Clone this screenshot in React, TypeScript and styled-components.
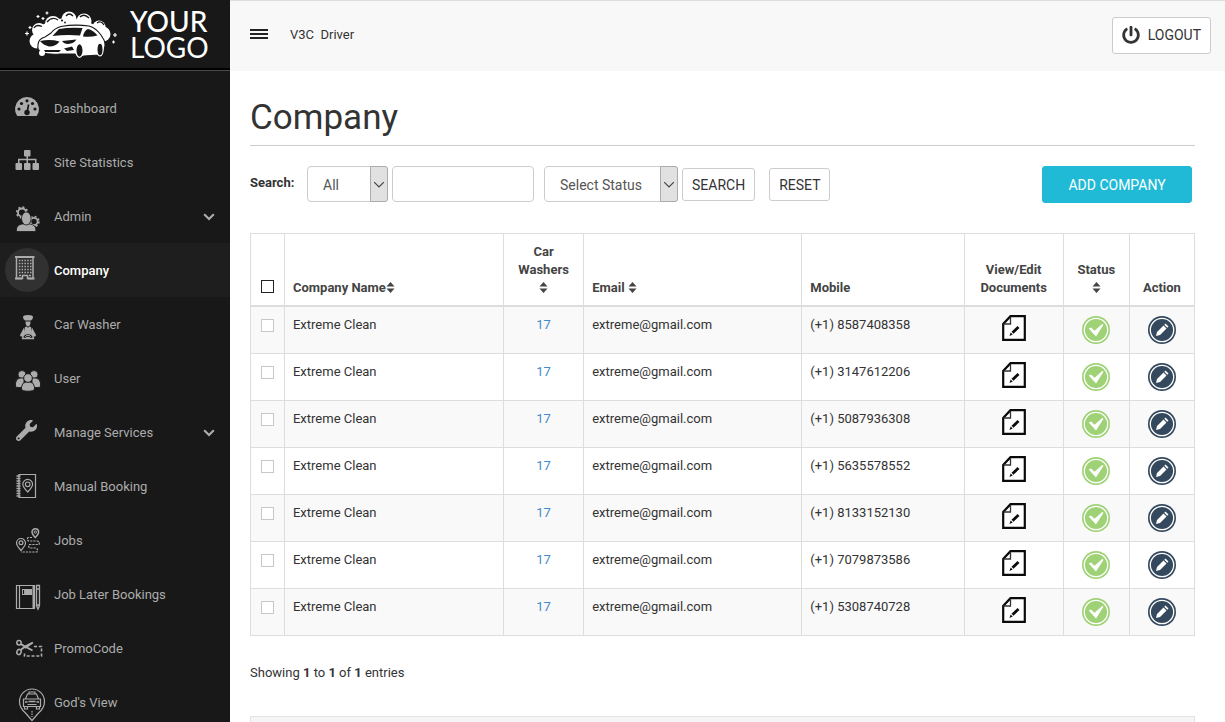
import React from 'react';
import styled, { createGlobalStyle, css } from 'styled-components';
import { FaPowerOff, FaWrench } from 'react-icons/fa';

const GlobalStyle = createGlobalStyle`
  *, *::before, *::after { box-sizing: border-box; }
  body {
    margin: 0;
    background: #fff;
    color: #333;
    font: 13px/18px Roboto, "Liberation Sans", sans-serif;
  }
  button, input, select { font: inherit; color: inherit; }
`;

const NAV_BG = '#181818';

const Shell = styled.div`
  display: flex;
  height: 100vh;
`;

const Sidebar = styled.aside`
  flex: none;
  width: 230px;
  overflow: hidden;
  background: ${NAV_BG};
  color: #acacac;
`;

const Brand = styled.a`
  display: flex;
  align-items: center;
  gap: 10px;
  height: 68px;
  padding-left: 24px;
  color: #fff;
  text-decoration: none;
`;

const BrandName = styled.span`
  font: 28px/26px Lato, "Liberation Sans", sans-serif;
`;

const BrandStrong = styled.span`
  display: block;
  font-weight: 500;
`;

const Nav = styled.nav`
  padding-top: 11px;
  border-top: 2px solid #000;
  box-shadow: inset 0 1px 0 #4a4a4a;
`;

const NavItem = styled.a<{ $active?: boolean }>`
  display: flex;
  align-items: center;
  gap: 5px;
  height: 54px;
  padding: 0 15px 0 5px;
  color: ${(p) => (p.$active ? '#fff' : 'inherit')};
  font-weight: ${(p) => (p.$active ? 500 : 400)};
  background: ${(p) => (p.$active ? '#1e1e1e' : 'transparent')};
  text-decoration: none;
`;

const NavIcon = styled.span<{ $active?: boolean }>`
  flex: none;
  width: 44px;
  height: 44px;
  border-radius: 50%;
  color: #acacac;
  background: ${(p) => (p.$active ? '#313131' : 'transparent')};
  svg { display: block; }
`;

const NavLabel = styled.span`
  flex: 1;
  padding-top: 2px;
`;

const Main = styled.div`
  flex: 1;
  min-width: 0;
  overflow: hidden;
`;

const TopBar = styled.header`
  display: flex;
  align-items: center;
  height: 71px;
  padding: 0 14px 2px 20px;
  border-top: 1px solid #ddd;
  background: #f8f8f8;
`;

const MenuButton = styled.button`
  display: grid;
  gap: 2px;
  width: 18px;
  margin-right: 22px;
  padding: 0 0 2px;
  border: 0;
  background: none;
`;

const MenuBar = styled.span`
  height: 2px;
  background: #222;
`;

const UserName = styled.span`
  flex: 1;
  white-space: pre;
`;

const Button = styled.button<{ $primary?: boolean }>`
  display: flex;
  align-items: center;
  justify-content: center;
  gap: 8px;
  height: 33px;
  padding: 0 9px;
  border: 1px solid #ccc;
  border-radius: 3px;
  background: #fff;
  font-size: 14px;
  white-space: nowrap;
  ${(p) =>
    p.$primary &&
    css`
      height: 37px;
      width: 150px;
      border-color: #20bad6;
      background: #20bad6;
      color: #fff;
    `}
`;

const LogoutButton = styled(Button)`
  height: 37px;
`;

const Content = styled.main`
  padding: 24px 30px 0 20px;
`;

const Title = styled.h1`
  margin: 0;
  padding-bottom: 5px;
  border-bottom: 1px solid #ccc;
  font-size: 35px;
  line-height: 45px;
  font-weight: 400;
`;

const Toolbar = styled.form`
  display: flex;
  align-items: center;
  margin: 20px 3px 30px 0;
`;

const FieldLabel = styled.label`
  width: 57px;
  padding-bottom: 4px;
  font-weight: 700;
`;

const fieldBox = css`
  height: 36px;
  border: 1px solid #ccc;
  border-radius: 4px;
  background: #fff;
  font-size: 14px;
`;

const SelectBox = styled.span<{ $width: number }>`
  position: relative;
  align-self: flex-start;
  width: ${(p) => p.$width}px;
`;

const Select = styled.select`
  ${fieldBox}
  display: block;
  width: 100%;
  padding: 2px 0 0 15px;
  appearance: none;
  color: #555;
`;

const SelectArrow = styled.span`
  position: absolute;
  top: 0;
  right: 0;
  display: grid;
  place-items: center;
  width: 18px;
  height: 36px;
  border: 1px solid #acacac;
  border-radius: 0 3px 3px 0;
  background: #e1e1e1;
  color: #444;
  pointer-events: none;
`;

const TextField = styled.input`
  ${fieldBox}
  align-self: flex-start;
  width: 142px;
  margin: 0 10px 0 4px;
  padding: 0 8px;
`;

const ButtonGroup = styled.div`
  display: flex;
  flex: 1;
  gap: 14px;
  margin-left: 4px;
`;

const Table = styled.table`
  width: 100%;
  table-layout: fixed;
  border-collapse: collapse;
`;

const Col = styled.col<{ $share: number }>`
  width: ${(p) => p.$share}%;
`;

const HeadCell = styled.th<{ $center?: boolean }>`
  height: 72px;
  padding: 8px;
  border: 1px solid #ddd;
  border-bottom: 2px solid #ddd;
  color: #444;
  text-align: ${(p) => (p.$center ? 'center' : 'left')};
  vertical-align: bottom;
`;

const Row = styled.tr`
  height: 47px;
  &:first-child { height: 48px; }
  &:nth-child(odd) { background: #f9f9f9; }
`;

const Cell = styled.td<{ $center?: boolean; $top?: number }>`
  padding: ${(p) => p.$top ?? 9}px 8px 0;
  border: 1px solid #ddd;
  text-align: ${(p) => (p.$center ? 'center' : 'left')};
  vertical-align: top;
`;

const Tick = styled.input<{ $dark?: boolean }>`
  display: block;
  width: 13px;
  height: 13px;
  margin: 4px auto;
  appearance: none;
  border: 1px solid ${(p) => (p.$dark ? '#222' : '#c8c8c8')};
  background: #fff;
`;

const CountLink = styled.a`
  color: #428bca;
  text-decoration: none;
`;

const IconButton = styled.button`
  display: block;
  margin: 0 auto;
  padding: 0;
  border: 0;
  background: none;
  svg { display: block; }
`;

const SortSvg = styled.svg`
  vertical-align: -1px;
`;

const Summary = styled.p`
  margin: 28px 0 34px;
`;

const Notes = styled.section`
  height: 120px;
  border: 1px solid #e3e3e3;
  background: #f4f6f6;
`;

const CarLogo = () => (
  <svg width="96" height="68" viewBox="24 0 96 68" aria-hidden="true">
    <g fill="#fff">
      <circle cx="37" cy="41" r="7.500" />
      <circle cx="103" cy="34" r="7.500" />
      <circle cx="99" cy="27" r="6.500" />
      <circle cx="84" cy="21" r="7.500" />
      <circle cx="69" cy="19" r="7.500" />
      <circle cx="53" cy="24" r="8" />
      <circle cx="39" cy="30" r="7" />
    </g>
    <path d="M36 28L52 20L66 18L84 20L99 27L104 38L40 44Z" fill="#fff" />
    <path
      d="M34 28Q36 24 42 26.500M47 22Q52 16 58 20M66 16Q69 12 73 16M80 17Q84 13 89 18M97 23Q101 20 104 25"
      fill="none"
      stroke={NAV_BG}
      strokeWidth="1.300"
    />
    <circle cx="62" cy="20.500" r="1.100" fill={NAV_BG} />
    <circle cx="65" cy="22.500" r="0.900" fill={NAV_BG} />
    <path
      d="M38 45Q38 39 45 37L51 33Q55 28 61 26.500Q75 24 89 26Q96 28 101 35L104 40Q106 44 104 50Q103 54 99 55L84 56L78 58L75 54L60 54Q48 55 41 52Q37 50 38 45Z"
      fill="#fff"
      stroke={NAV_BG}
      strokeWidth="1.100"
    />
    <path d="M52.500 36L59 29Q70 27 82.500 28L80 35.500Q66 34.500 52.500 36Z" fill={NAV_BG} />
    <path d="M83 36.500Q84 30.500 88 29Q93 30 97.500 35.500Q90 37.500 83 36.500Z" fill={NAV_BG} />
    <path d="M40 41Q50 39 59.500 41.500Q56 46.500 49 46.500Q43 45 40 41Z" fill={NAV_BG} />
    <path d="M62 41L76.500 39.500Q74 43.500 68 44Q64 44 62 41Z" fill={NAV_BG} />
    <path d="M44 50L61 50L59 52L45 52Z" fill={NAV_BG} />
    <path d="M64 48.500L72 46.500L74 50L67 51Z" fill={NAV_BG} />
    <circle cx="42" cy="53" r="3" fill="#fff" />
    <g fill={NAV_BG} stroke="#fff" strokeWidth="1.200">
      <ellipse cx="79.500" cy="50.500" rx="3.600" ry="6.800" />
      <ellipse cx="100" cy="49.500" rx="3.100" ry="6.400" />
    </g>
    <path
      d="M27 31.500v4M25 33.500h4M30 26v3M28.500 27.500h3M38 15v3M36.500 16.500h3M43 17v3M41.500 18.500h3M47 11.500v3M45.500 13h3M115 33v4M113 35h4M113.500 40.500v3M112 42h3"
      stroke="#fff"
      strokeWidth="1.200"
    />
  </svg>
);

/* Sidebar icons share one 44-unit canvas, the size of the active disc. */
const Glyph = ({ children }: { children: React.ReactNode }) => (
  <svg
    width="44"
    height="44"
    viewBox="0 0 44 44"
    fill="none"
    stroke="currentColor"
    strokeWidth="1.2"
    aria-hidden="true"
  >
    {children}
  </svg>
);

const solid = { fill: 'currentColor', stroke: 'none' };

const DashboardIcon = () => (
  <Glyph>
    <path d="M12.200 30A12 12 0 1 1 31.800 30Z" {...solid} />
    <g fill={NAV_BG} stroke="none">
      <circle cx="14" cy="23" r="1.600" />
      <circle cx="30" cy="23" r="1.600" />
      <circle cx="16.500" cy="17.500" r="1.600" />
      <circle cx="27.500" cy="17.500" r="1.600" />
      <circle cx="22" cy="14.800" r="1.600" />
      <circle cx="22" cy="26.500" r="2.700" />
    </g>
    <path d="M22.200 26L23.600 18.500" stroke={NAV_BG} strokeWidth="1.700" />
  </Glyph>
);

const SitemapIcon = () => (
  <Glyph>
    <g {...solid}>
      <rect x="19" y="10" width="6.500" height="6.500" rx="1" />
      <rect x="10.500" y="23" width="6.500" height="7" rx="1" />
      <rect x="19" y="23" width="6.500" height="7" rx="1" />
      <rect x="27.500" y="23" width="6.500" height="7" rx="1" />
    </g>
    <path d="M22.250 16V23M13.750 23.500V19.500H30.750V23.500" strokeWidth="1.500" />
  </Glyph>
);

const AdminIcon = () => (
  <Glyph>
    <circle cx="17" cy="18.500" r="4" strokeWidth="1.800" />
    <circle cx="17" cy="18.500" r="5.400" strokeWidth="1.500" strokeDasharray="2.100 2.100" />
    <circle cx="29" cy="27.500" r="3.600" strokeWidth="1.800" />
    <circle cx="29" cy="27.500" r="5" strokeWidth="1.500" strokeDasharray="2 1.920" />
    <g fill="currentColor" stroke={NAV_BG} strokeWidth="0.800">
      <path d="M11.500 37.500V35Q12 31 17 30H25Q30.300 31 30.800 35V37.500Z" />
      <ellipse cx="21.300" cy="24.500" rx="4.800" ry="6.500" />
    </g>
  </Glyph>
);

const BuildingIcon = () => (
  <Glyph>
    <path d="M11.500 9H28V30.500H22.500V27.500H17.500V30.500H11.500Z" strokeWidth="1.500" />
    <path d="M10 9H29.500M10 30.500H17M23 30.500H29.500" strokeWidth="1.800" />
    <path
      d="M13.800 12.500H26.800M13.800 15.500H26.800M13.800 18.500H26.800M13.800 21.500H26.800M13.800 24.500H26.800"
      strokeWidth="1.600"
      strokeDasharray="1.500 1.300"
    />
    <path d="M14 27.500H16M24 27.500H26" strokeWidth="1.600" />
  </Glyph>
);

const WasherIcon = () => (
  <Glyph>
    <g {...solid}>
      <path d="M18 15Q18 13 23 13Q28 13 28 15Q28 17 26 18.500H20Q18 17 18 15Z" />
      <path d="M20.500 19.500H25.500Q25.500 24 23 24.500Q20.500 24 20.500 19.500Z" />
      <path d="M20 25L22 24.500L23 26L24 24.500L26 25L27 31H19Z" />
      <path d="M19 25.500L15 33Q15 35 17.500 34.500L20 31.500ZM27 25.500L31 33Q31 35 28.500 34.500L26 31.500Z" />
    </g>
    <path d="M17.500 36.500Q18 31.500 23 31.500Q28 31.500 28.500 36.500Z" fill={NAV_BG} strokeWidth="1.400" />
    <ellipse cx="23" cy="34.500" rx="2.500" ry="1" strokeWidth="1" />
  </Glyph>
);

const UsersIcon = () => (
  <Glyph>
    <g fill="currentColor" stroke={NAV_BG} strokeWidth="0.900">
      <circle cx="17" cy="18.500" r="4" />
      <circle cx="29" cy="18.500" r="4" />
      <path d="M10.500 31V27Q11 22.500 15 22H19V31.500H13ZM35.500 31V27Q35 22.500 31 22H27V31.500H33Z" />
      <path d="M16.500 33V31Q17 26.500 21 26H25Q29 26.500 29.500 31V33Q29 35.200 23 35.200Q17 35.200 16.500 33Z" />
      <circle cx="23" cy="22" r="4.300" />
    </g>
  </Glyph>
);

const ServicesIcon = () => (
  <Glyph>
    <FaWrench x="11" y="10" size={21} />
  </Glyph>
);

const BookingIcon = () => (
  <Glyph>
    <path d="M14 10.500H30.500V33.500H14Z" />
    <path
      d="M11.500 12H15.500M11.500 14.500H15.500M11.500 17H15.500M11.500 19.500H15.500M11.500 22H15.500M11.500 24.500H15.500M11.500 27H15.500M11.500 29.500H15.500M11.500 32H15.500"
      strokeWidth="1.300"
    />
    <path d="M22.700 28Q17.800 23 17.800 20.300A4.900 4.900 0 0 1 27.600 20.300Q27.600 23 22.700 28Z" />
    <circle cx="22.700" cy="20.300" r="2.300" />
  </Glyph>
);

const JobsIcon = () => (
  <Glyph>
    <path d="M16 32.500Q11.500 27.500 11.500 25A4.500 4.500 0 0 1 20.500 25Q20.500 27.500 16 32.500Z" />
    <circle cx="16" cy="24.800" r="1.900" />
    <path d="M30.300 19.500Q27 16 27 14A3.300 3.300 0 0 1 33.600 14Q33.600 16 30.300 19.500Z" strokeWidth="1.500" />
    <circle cx="30.300" cy="14" r="1.200" strokeWidth="1" />
    <path
      d="M27 19.500H23Q21.500 21.500 23.500 23H32Q35 23.500 34 26.500H25Q22.500 28 24.500 30H31Q33.500 31 32 34H16"
      strokeDasharray="2.200 1"
    />
  </Glyph>
);

const LaterIcon = () => (
  <Glyph>
    <path d="M11.500 13.500H29.500V36.500H11.500ZM14.500 13.500V36.500" />
    <path d="M28.500 13.500V36.500" strokeWidth="2" />
    <rect x="17" y="17" width="10" height="6" {...solid} />
    <path d="M18.500 18V22" stroke={NAV_BG} />
    <path d="M31.500 13.500H34.500V33.500L33 37L31.500 33.500ZM31.500 17H34.500M31.500 33H34.500" strokeWidth="1.300" />
  </Glyph>
);

const PromoIcon = () => (
  <Glyph>
    <circle cx="14" cy="16.800" r="2.200" strokeWidth="1.500" />
    <ellipse cx="14" cy="26" rx="2.100" ry="2.600" transform="rotate(25 14 26)" strokeWidth="1.500" />
    <path d="M15.800 18.200L27.500 24.500M15.500 24L21 20L27.800 16.500L20 22" strokeWidth="1.900" />
    <path d="M29 20.500H36.500V30H19.500V26" strokeWidth="1.600" strokeDasharray="3 1.800" />
  </Glyph>
);

const GodViewIcon = () => (
  <Glyph>
    <path d="M27 40.500L20.500 33Q14.500 28 14.500 21.500A12.500 12.500 0 0 1 39.500 21.500Q39.500 28 33.500 33Z" />
    <path d="M24 14V12H30V14M20.500 19L22.500 14H31.500L33.500 19" />
    <path d="M18.500 19H35.500V26.500H18.500ZM19.500 26.500V29H22.500V26.500M31.500 26.500V29H34.500V26.500M22.500 24.500H31.500" />
    <path d="M20 22H22.500M31.500 22H34M23.500 21.500H30.500" strokeWidth="1.500" />
    <path d="M27 31V37" strokeDasharray="1.500 1" />
  </Glyph>
);

const Chevron = ({ size, weight }: { size: number; weight: number }) => (
  <svg
    width={size}
    height={size}
    viewBox="0 0 10 10"
    fill="none"
    stroke="currentColor"
    strokeWidth={weight}
    aria-hidden="true"
  >
    <path d="M1 3.500L5 7.500L9 3.500" />
  </svg>
);

const SortIcon = () => (
  <SortSvg width="9" height="11" viewBox="0 0 9 11" fill="currentColor" aria-hidden="true">
    <path d="M4.500 0L8.500 4.500H0.500ZM4.500 11L8.500 6.500H0.500Z" />
  </SortSvg>
);

const DocumentIcon = () => (
  <svg width="26" height="26" viewBox="0 0 26 26" aria-hidden="true">
    <path d="M9.500 1.200H23.800V24.800H2.200V9Z" fill="#fff" stroke="#0a0a0a" strokeWidth="2.200" />
    <path d="M9.500 2V9H2.500" fill="none" stroke="#333" strokeWidth="1.300" />
    <path d="M11.500 17.800L17.500 12" stroke="#0a0a0a" strokeWidth="2.800" />
    <path d="M8.500 21L9.700 17.500L11.700 19.500Z" fill="#0a0a0a" />
  </svg>
);

const StatusIcon = () => (
  <svg width="28" height="28" viewBox="0 0 28 28" aria-hidden="true">
    <circle cx="14" cy="14" r="14" fill="#9fd277" />
    <circle cx="14" cy="14" r="11.700" fill="none" stroke="#fff" strokeWidth="1.300" />
    <path d="M6.700 12.600L9 11.500L12.500 14.800L20.500 7.800L21.400 9L14 20.500Z" fill="#fff" />
  </svg>
);

const EditIcon = () => (
  <svg width="28" height="28" viewBox="0 0 28 28" aria-hidden="true">
    <circle cx="14" cy="14" r="14" fill="#34495e" />
    <circle cx="14" cy="14" r="11.700" fill="none" stroke="#fff" strokeWidth="1.300" />
    <path d="M8 20L9 16L15.500 9.500L18.500 12.500L12 19ZM16.300 8.700L17.500 7.500L20.500 10.500L19.300 11.700Z" fill="#fff" />
  </svg>
);

const navItems = [
  { label: 'Dashboard', Icon: DashboardIcon },
  { label: 'Site Statistics', Icon: SitemapIcon },
  { label: 'Admin', Icon: AdminIcon, expandable: true },
  { label: 'Company', Icon: BuildingIcon, active: true },
  { label: 'Car Washer', Icon: WasherIcon },
  { label: 'User', Icon: UsersIcon },
  { label: 'Manage Services', Icon: ServicesIcon, expandable: true },
  { label: 'Manual Booking', Icon: BookingIcon },
  { label: 'Jobs', Icon: JobsIcon },
  { label: 'Job Later Bookings', Icon: LaterIcon },
  { label: 'PromoCode', Icon: PromoIcon },
  { label: "God's View", Icon: GodViewIcon },
];

const columnShares = [3.6, 23.2, 8.5, 23.1, 17.2, 10.5, 7, 6.9];

const mobiles = [
  '8587408358',
  '3147612206',
  '5087936308',
  '5635578552',
  '8133152130',
  '7079873586',
  '5308740728',
];

export default function App() {
  return (
    <>
      <GlobalStyle />
      <Shell>
        <Sidebar>
          <Brand href="#">
            <CarLogo />
            <BrandName>
              <BrandStrong>YOUR</BrandStrong>
              LOGO
            </BrandName>
          </Brand>
          <Nav>
            {navItems.map(({ label, Icon, active, expandable }) => (
              <NavItem key={label} href="#" $active={active}>
                <NavIcon $active={active}>
                  <Icon />
                </NavIcon>
                <NavLabel>{label}</NavLabel>
                {expandable && <Chevron size={12} weight={1.8} />}
              </NavItem>
            ))}
          </Nav>
        </Sidebar>
        <Main>
          <TopBar>
            <MenuButton type="button" aria-label="Toggle menu">
              <MenuBar />
              <MenuBar />
              <MenuBar />
            </MenuButton>
            <UserName>{'V3C  Driver'}</UserName>
            <LogoutButton type="button">
              <FaPowerOff size={18} aria-hidden="true" />
              LOGOUT
            </LogoutButton>
          </TopBar>
          <Content>
            <Title>Company</Title>
            <Toolbar onSubmit={(e) => e.preventDefault()}>
              <FieldLabel htmlFor="keyword">Search:</FieldLabel>
              <SelectBox $width={81}>
                <Select aria-label="Search in">
                  <option>All</option>
                </Select>
                <SelectArrow>
                  <Chevron size={12} weight={1} />
                </SelectArrow>
              </SelectBox>
              <TextField id="keyword" type="text" />
              <SelectBox $width={134}>
                <Select aria-label="Status">
                  <option>Select Status</option>
                </Select>
                <SelectArrow>
                  <Chevron size={12} weight={1} />
                </SelectArrow>
              </SelectBox>
              <ButtonGroup>
                <Button type="submit">SEARCH</Button>
                <Button type="reset">RESET</Button>
              </ButtonGroup>
              <Button type="button" $primary>
                ADD COMPANY
              </Button>
            </Toolbar>
            <Table>
              <colgroup>
                {columnShares.map((share, i) => (
                  <Col key={i} $share={share} />
                ))}
              </colgroup>
              <thead>
                <tr>
                  <HeadCell $center>
                    <Tick type="checkbox" aria-label="Select all" $dark />
                  </HeadCell>
                  <HeadCell>
                    Company Name
                    <SortIcon />
                  </HeadCell>
                  <HeadCell $center>
                    Car Washers
                    <br />
                    <SortIcon />
                  </HeadCell>
                  <HeadCell>
                    Email <SortIcon />
                  </HeadCell>
                  <HeadCell>Mobile</HeadCell>
                  <HeadCell $center>View/Edit Documents</HeadCell>
                  <HeadCell $center>
                    Status
                    <br />
                    <SortIcon />
                  </HeadCell>
                  <HeadCell $center>Action</HeadCell>
                </tr>
              </thead>
              <tbody>
                {mobiles.map((mobile) => (
                  <Row key={mobile}>
                    <Cell $center $top={8}>
                      <Tick type="checkbox" aria-label={`Select ${mobile}`} />
                    </Cell>
                    <Cell>Extreme Clean</Cell>
                    <Cell $center>
                      <CountLink href="#">17</CountLink>
                    </Cell>
                    <Cell>extreme@gmail.com</Cell>
                    <Cell>(+1) {mobile}</Cell>
                    <Cell $center $top={8}>
                      <IconButton type="button" aria-label="View or edit documents">
                        <DocumentIcon />
                      </IconButton>
                    </Cell>
                    <Cell $center>
                      <IconButton type="button" aria-label="Active">
                        <StatusIcon />
                      </IconButton>
                    </Cell>
                    <Cell $center>
                      <IconButton type="button" aria-label="Edit">
                        <EditIcon />
                      </IconButton>
                    </Cell>
                  </Row>
                ))}
              </tbody>
            </Table>
            <Summary>
              Showing <b>1</b> to <b>1</b> of <b>1</b> entries
            </Summary>
            <Notes />
          </Content>
        </Main>
      </Shell>
    </>
  );
}
